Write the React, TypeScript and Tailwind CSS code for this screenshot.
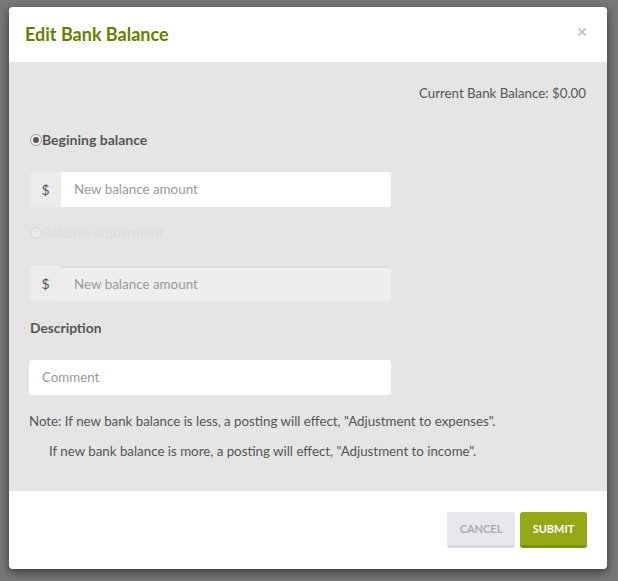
import { X } from "lucide-react";

function Radio({ checked, disabled }: { checked?: boolean; disabled?: boolean }) {
  return (
    <span
      className={
        "flex h-[12px] w-[12px] shrink-0 items-center justify-center rounded-full border " +
        (disabled ? "border-[#d6d6d6] bg-[#e8e8e8]" : "border-[#9a9a9a] bg-[#f2f2f2]")
      }
    >
      {checked && <span className="h-[6px] w-[6px] rounded-full bg-[#555]" />}
    </span>
  );
}

function MoneyInput({ disabled }: { disabled?: boolean }) {
  return (
    <div className="flex h-[35px] w-[361px] overflow-hidden rounded-[3px]">
      <div className="flex w-[31px] items-center justify-center bg-[#ececec] text-[14px] text-[#555]">$</div>
      <div
        className={
          "flex flex-1 items-center px-[13px] text-[13.4px] text-[#999] " +
          (disabled ? "border-t-2 border-[#dcdcdc] bg-[#eeeeee]" : "bg-white")
        }
      >
        New balance amount
      </div>
    </div>
  );
}

export default function App() {
  return (
    <div className="h-[581px] w-[618px] overflow-hidden bg-[#777777] pt-[7px] pl-[9px] font-['Lato',sans-serif]">
      <div className="w-[598px] overflow-hidden rounded-[4px] shadow-[0_3px_10px_rgba(0,0,0,0.55)]">
        {/* header */}
        <div className="flex h-[55px] items-center justify-between bg-white pl-[16px] pr-[19px]">
          <h2 className="text-[18px] font-bold text-[#6b7d00]">Edit Bank Balance</h2>
          <X className="-mt-[6px] h-[12px] w-[12px] text-[#bbbbbb]" strokeWidth={3.5} />
        </div>

        {/* body */}
        <div className="flex flex-col bg-[#e5e5e5] px-[21px] pt-[21px] pb-[30px] text-[13.3px] text-[#555]">
          <div className="text-right leading-[20px]">Current Bank Balance: $0.00</div>

          <label className="mt-[27px] flex items-center text-[14px] leading-[20px]">
            <Radio checked />
            <span className="font-bold text-[#555]">Begining balance</span>
          </label>

          <div className="mt-[22px]">
            <MoneyInput />
          </div>

          <label className="mt-[16px] flex items-center text-[14px] leading-[20px]">
            <Radio disabled />
            <span className="font-bold text-[#dcdcdc]">Balance adjustment</span>
          </label>

          <div className="mt-[23px]">
            <MoneyInput disabled />
          </div>

          <div className="mt-[17px] text-[13.8px] font-bold leading-[20px]">Description</div>

          <div className="-ml-[1px] mt-[22px] flex h-[35px] w-[362px] items-center rounded-[3px] bg-white px-[13px] text-[#999]">
            Comment
          </div>

          <p className="-ml-[1px] mt-[16px] leading-[20px]">
            Note: If new bank balance is less, a posting will effect, "Adjustment to expenses".
          </p>
          <p className="mt-[10px] pl-[19px] leading-[20px]">
            If new bank balance is more, a posting will effect, "Adjustment to income".
          </p>
        </div>

        {/* footer */}
        <div className="flex justify-end gap-[5px] bg-white pt-[21px] pr-[20px] pb-[21px]">
          <button className="h-[36px] w-[68px] rounded-[3px] border-b-[3px] border-[#d5d8dd] bg-[#e6e8eb] pt-[2px] text-[11px] font-bold uppercase text-[#a9adb2]">
            Cancel
          </button>
          <button className="h-[36px] w-[67px] rounded-[3px] border-b-[3px] border-[#7e9010] bg-[#95a817] pt-[2px] text-[11px] font-bold uppercase text-white">
            Submit
          </button>
        </div>
      </div>
    </div>
  );
}
